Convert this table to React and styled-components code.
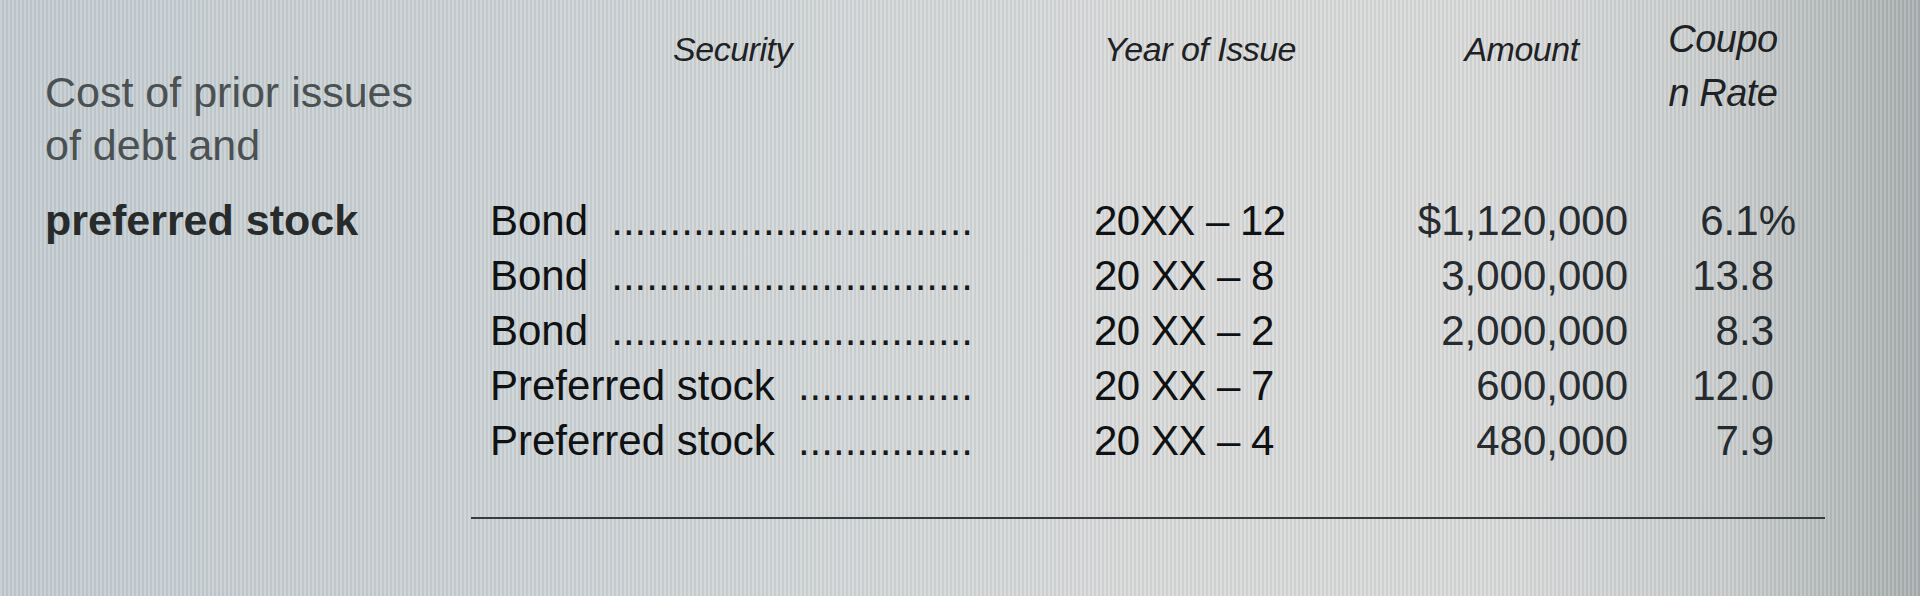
import React from 'react'
import styled, {createGlobalStyle} from 'styled-components'

const rows = [
    {name: 'Bond', dots: 31, year: '20XX – 12', amount: '$1,120,000', rate: '6.1%', pct: true},
    {name: 'Bond', dots: 31, year: '20 XX – 8', amount: '3,000,000', rate: '13.8'},
    {name: 'Bond', dots: 31, year: '20 XX – 2', amount: '2,000,000', rate: '8.3'},
    {name: 'Preferred stock', dots: 15, year: '20 XX – 7', amount: '600,000', rate: '12.0'},
    {name: 'Preferred stock', dots: 15, year: '20 XX – 4', amount: '480,000', rate: '7.9'},
]

const App = () => {
    return (
        <>
        <GlobalStyle />
        <Page>
            <Table>
                <Label>
                    Cost of prior issues<br />of debt and
                </Label>
                <Head $w="485px">Security</Head>
                <Head $w="220px">Year of Issue</Head>
                <Head $w="213px">Amount</Head>
                <Head $w="146px" $top="0" $big>Coupo<br />n Rate</Head>

                {rows.map((row, i) => (
                    <React.Fragment key={i}>
                        <Label $bold>{i === 0 ? 'preferred stock' : ''}</Label>
                        <Security>
                            <span>{row.name}</span>
                            <Leader>{'.'.repeat(row.dots)}</Leader>
                        </Security>
                        <Year>{row.year}</Year>
                        <Amount>{row.amount}</Amount>
                        <Rate $pct={row.pct}>{row.rate}</Rate>
                    </React.Fragment>
                ))}
            </Table>
            <Rule />
        </Page>
        </>
    )
}

const GlobalStyle = createGlobalStyle`
    html, body {
        margin: 0;
        padding: 0;
    }
    body {
        width: 1920px;
        height: 596px;
        overflow: hidden;
        font-family: "Liberation Sans", Arial, sans-serif;
        background:
            repeating-linear-gradient(90deg, rgba(255,255,255,0.14) 0 2px, rgba(60,80,90,0.06) 2px 4px),
            linear-gradient(90deg, #c2cace 0%, #c8cfd2 20%, #d0d4d5 40%, #d8d9d8 60%, #d8d9d8 78%, #c8cbcb 90%, #a8adad 100%);
    }
`

const Page = styled.div`
    padding: 12px 0 0 45px;
    display: flex;
    flex-direction: column;
`

const Table = styled.div`
    display: grid;
    grid-template-columns: 445px 600px 325px 235px 146px;
    grid-template-rows: 181px repeat(5, 55px);
    font-size: 42px;
    color: #0f1113;
`

const Label = styled.div`
    padding-top: ${p => p.$bold ? '0' : '54px'};
    font-size: 43px;
    line-height: ${p => p.$bold ? '55px' : '53px'};
    font-weight: ${p => p.$bold ? 700 : 400};
    color: ${p => p.$bold ? '#282b2b' : '#4b5152'};
    white-space: nowrap;
`

const Head = styled.div`
    width: ${p => p.$w};
    padding-top: ${p => p.$top || '10px'};
    font-size: ${p => p.$big ? '38px' : '34px'};
    line-height: 54px;
    font-style: italic;
    letter-spacing: -0.5px;
    text-align: center;
    color: #1e2224;
`

const Security = styled.div`
    width: 483px;
    display: flex;
    justify-content: space-between;
    line-height: 55px;
    white-space: nowrap;
`

const Leader = styled.span`
    color: #16181a;
`

const Year = styled.div`
    padding-left: 4px;
    line-height: 55px;
    letter-spacing: -0.5px;
    white-space: nowrap;
`

const Amount = styled.div`
    padding-right: 22px;
    line-height: 55px;
    text-align: right;
    color: #262b2f;
`

const Rate = styled.div`
    padding-right: ${p => p.$pct ? '0' : '22px'};
    line-height: 55px;
    text-align: right;
    color: #262b2f;
`

const Rule = styled.div`
    margin: 49px 0 0 426px;
    width: 1354px;
    height: 2px;
    background: #363b3d;
`

export default App
